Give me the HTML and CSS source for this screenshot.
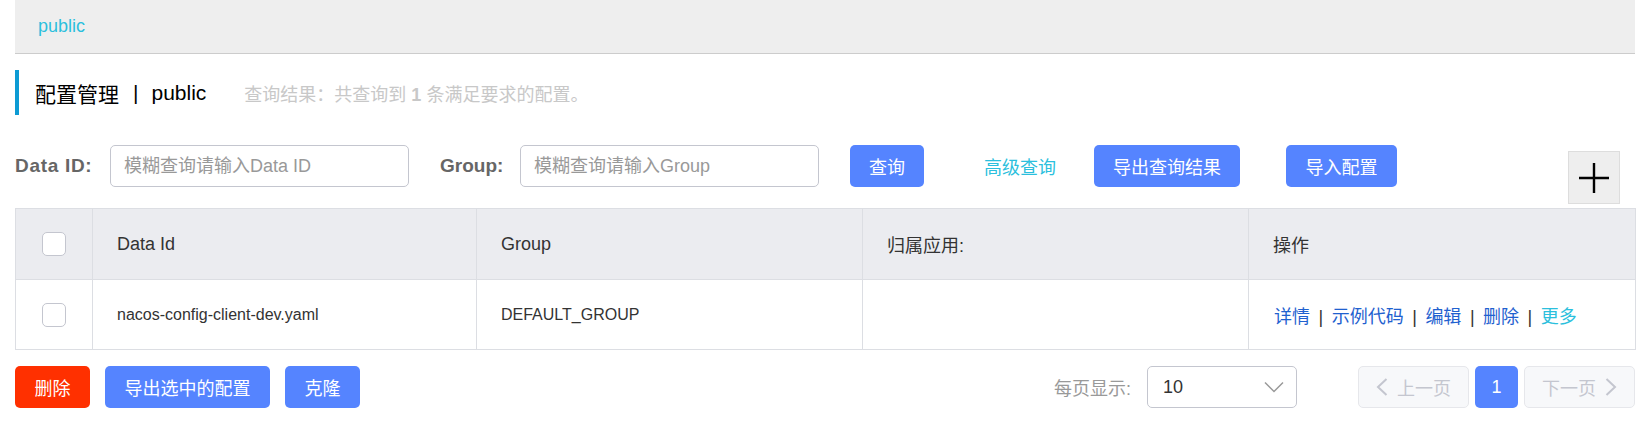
FILE: index.html
```html
<!DOCTYPE html>
<html lang="zh-CN">
<head>
<meta charset="utf-8">
<title>配置管理</title>
<link rel="stylesheet" href="styles.css">
</head>
<body>
<div class="page">
  <div class="crumb-bar"><span class="crumb-link">public</span></div>

  <div class="title-row">
    <span class="title-main">配置管理</span>
    <span class="title-sep">|</span>
    <span class="title-ns">public</span>
    <span class="title-sub">查询结果：共查询到 <b>1</b> 条满足要求的配置。</span>
  </div>

  <div class="search-row">
    <label class="field-label label-dataid">Data ID:</label>
    <div class="input-box"><input class="input" type="text" placeholder="模糊查询请输入Data ID"></div>
    <label class="field-label label-group">Group:</label>
    <div class="input-box"><input class="input" type="text" placeholder="模糊查询请输入Group"></div>
    <button class="btn btn-primary btn-query">查询</button>
    <a class="link-adv">高级查询</a>
    <button class="btn btn-primary btn-export">导出查询结果</button>
    <button class="btn btn-primary btn-import">导入配置</button>
    <div class="add-box">
      <svg width="32" height="32" viewBox="0 0 32 32"><path d="M16 1 V31 M1 16 H31" stroke="#000" stroke-width="2.4" fill="none"/></svg>
    </div>
  </div>

  <table class="grid">
    <colgroup>
      <col class="c-check"><col class="c-id"><col class="c-group"><col class="c-app"><col class="c-op">
    </colgroup>
    <thead>
      <tr>
        <th class="cell-check"><span class="checkbox"></span></th>
        <th>Data Id</th>
        <th>Group</th>
        <th>归属应用:</th>
        <th>操作</th>
      </tr>
    </thead>
    <tbody>
      <tr>
        <td class="cell-check"><span class="checkbox"></span></td>
        <td>nacos-config-client-dev.yaml</td>
        <td>DEFAULT_GROUP</td>
        <td></td>
        <td class="ops"><a class="op">详情</a><span class="op-sep">|</span><a class="op">示例代码</a><span class="op-sep">|</span><a class="op">编辑</a><span class="op-sep">|</span><a class="op">删除</a><span class="op-sep">|</span><a class="op op-more">更多</a></td>
      </tr>
    </tbody>
  </table>

  <div class="footer-row">
    <button class="btn btn-danger btn-del">删除</button>
    <button class="btn btn-primary btn-exp-sel">导出选中的配置</button>
    <button class="btn btn-primary btn-clone">克隆</button>
    <div class="pager">
      <span class="page-size-label">每页显示:</span>
      <div class="select">
        <span class="select-value">10</span>
        <svg class="select-arrow" width="20" height="12" viewBox="0 0 20 12"><path d="M1 1.5 L10 10.5 L19 1.5" stroke="#999" stroke-width="1.5" fill="none"/></svg>
      </div>
      <button class="pg-btn pg-prev"><svg width="12" height="18" viewBox="0 0 12 18"><path d="M10.5 1 L2 9 L10.5 17" stroke="#c4c6cf" stroke-width="2" fill="none"/></svg><span>上一页</span></button>
      <button class="pg-num">1</button>
      <button class="pg-btn pg-next"><span>下一页</span><svg width="12" height="18" viewBox="0 0 12 18"><path d="M1.5 1 L10 9 L1.5 17" stroke="#c4c6cf" stroke-width="2" fill="none"/></svg></button>
    </div>
  </div>
</div>
</body>
</html>
```

FILE: styles.css
```css
* { box-sizing: border-box; }
html, body { margin: 0; padding: 0; background: #fff; }
body {
  font-family: "Liberation Sans", "Noto Sans CJK SC", sans-serif;
  font-size: 18px;
  color: #333;
}
.page {
  width: 1635px;
  padding-left: 15px;
}

/* breadcrumb bar */
.crumb-bar {
  height: 54px;
  background: #eeeeee;
  border-bottom: 1px solid #cccccc;
  display: flex;
  align-items: center;
  padding-left: 23px;
}
.crumb-link { color: #2bbfdd; font-size: 18px; }

/* title */
.title-row {
  margin-top: 16px;
  height: 45px;
  border-left: 4px solid #0d9bd4;
  padding-left: 16px;
  display: flex;
  align-items: center;
  color: #000;
}
.title-main { font-size: 21px; }
.title-sep { font-size: 21px; margin: 0 13px 0 14px; }
.title-ns { font-size: 21px; }
.title-sub {
  font-size: 18px;
  color: #c8c8c8;
  margin-left: 38px;
}
.title-sub b { font-weight: bold; }

/* search row */
.search-row {
  margin-top: 30px;
  height: 42px;
  display: flex;
  align-items: center;
}
.field-label {
  font-weight: bold;
  color: #666;
  font-size: 19px;
}
.label-dataid { width: 95px; letter-spacing: 0.7px; }
.label-group { width: 80px; margin-left: 31px; }
.input-box {
  width: 299px;
  height: 42px;
  border: 1px solid #c4c6cf;
  border-radius: 5px;
  display: flex;
  align-items: center;
  padding: 0 13px;
}
.input {
  border: none;
  outline: none;
  width: 100%;
  font-family: inherit;
  font-size: 18px;
  color: #333;
  padding: 0;
  background: transparent;
}
.input::placeholder { color: #999; }

.btn {
  height: 42px;
  border: none;
  border-radius: 5px;
  padding: 0 19px;
  font-family: inherit;
  font-size: 18px;
  color: #fff;
  cursor: pointer;
}
.btn-primary { background: #5584ff; }
.btn-danger { background: #ff3000; }
.btn-query { margin-left: 31px; width: 74px; padding: 0; }
.link-adv { color: #2bbfdd; margin-left: 60px; font-size: 18px; }
.btn-export { margin-left: 38px; width: 146px; padding: 0; }
.btn-import { margin-left: 46px; width: 111px; padding: 0; }
.add-box {
  margin-left: auto;
  margin-right: 15px;
  align-self: flex-start;
  margin-top: 6px;
  width: 52px;
  height: 53px;
  background: #eeeeee;
  border: 1px solid #dddddd;
  display: flex;
  align-items: center;
  justify-content: center;
}

/* table */
.grid {
  margin-top: 21px;
  width: 1620px;
  border-collapse: collapse;
  table-layout: fixed;
  border: 1px solid #dcdee3;
}
.c-check { width: 77px; }
.c-id { width: 384px; }
.c-group { width: 386px; }
.c-app { width: 386px; }
.c-op { width: 387px; }
.grid th, .grid td {
  border: 1px solid #dcdee3;
  text-align: left;
  font-weight: normal;
  padding: 0 0 0 24px;
  color: #333;
}
.grid th { background: #ebecf0; height: 71px; font-size: 18px; }
.grid td { background: #fff; height: 70px; font-size: 16px; }
.grid .cell-check { padding: 0; text-align: center; }
.checkbox {
  display: inline-block;
  width: 24px;
  height: 24px;
  border: 1px solid #c4c6cf;
  border-radius: 5px;
  background: #fff;
  vertical-align: middle;
}
.grid td.ops { white-space: nowrap; font-size: 18px; padding-left: 25px; }
.op { color: #1f61cf; }
.op-more { color: #2bbfdd; }
.op-sep { color: #333; margin: 0 8.5px; }

/* footer */
.footer-row {
  margin-top: 16px;
  width: 1620px;
  height: 42px;
  display: flex;
  align-items: center;
}
.btn-del { width: 75px; padding: 0; }
.btn-exp-sel { margin-left: 15px; width: 165px; padding: 0; }
.btn-clone { margin-left: 15px; width: 75px; padding: 0; }
.pager {
  margin-left: auto;
  display: flex;
  align-items: center;
  height: 42px;
}
.page-size-label { color: #999; font-size: 18px; margin-right: 16px; }
.select {
  width: 150px;
  height: 42px;
  border: 1px solid #c4c6cf;
  border-radius: 5px;
  display: flex;
  align-items: center;
  justify-content: space-between;
  padding: 0 12px 0 15px;
}
.select-value { color: #333; font-size: 18px; }
.pg-btn {
  width: 111px;
  height: 42px;
  background: #f7f8fa;
  border: 1px solid #e6e7eb;
  border-radius: 5px;
  color: #c4c6cf;
  font-family: inherit;
  font-size: 18px;
  display: flex;
  align-items: center;
  justify-content: center;
  gap: 9px;
  padding: 0;
}
.pg-prev { margin-left: 61px; }
.pg-num {
  margin: 0 6px;
  width: 43px;
  height: 42px;
  background: #5584ff;
  color: #fff;
  border: none;
  border-radius: 5px;
  font-family: inherit;
  font-size: 18px;
  padding: 0;
}
```
